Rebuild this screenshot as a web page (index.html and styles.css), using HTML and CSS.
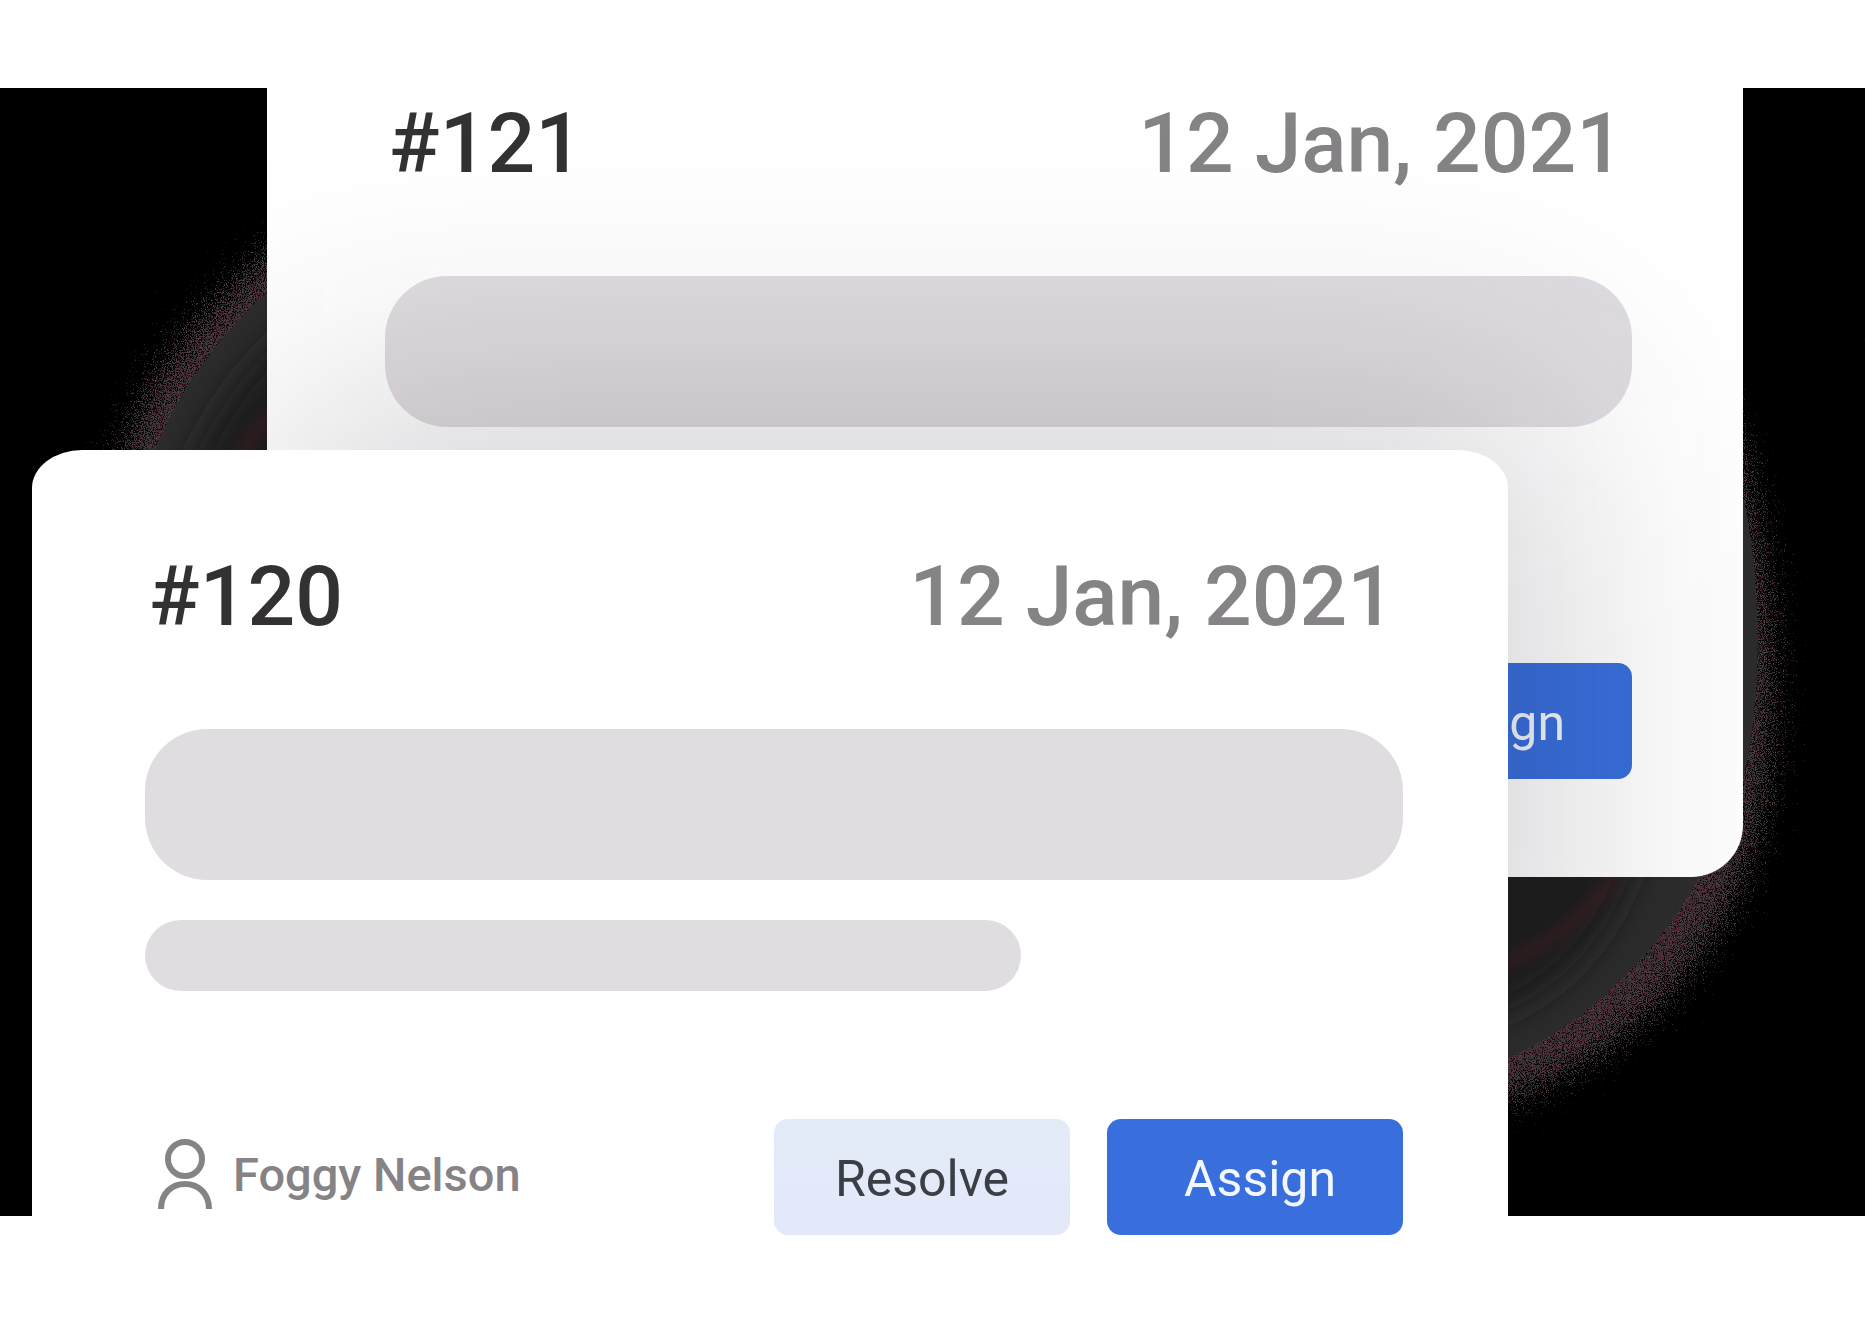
FILE: index.html
```html
<!DOCTYPE html>
<html lang="en">
<head>
<meta charset="utf-8">
<meta name="viewport" content="width=device-width, initial-scale=1">
<title>Tickets</title>
<link rel="stylesheet" href="styles.css">
</head>
<body>
<main class="stage">
  <svg class="halo" viewBox="0 0 1865 1128" preserveAspectRatio="none" aria-hidden="true">
    <defs>
      <filter id="soft" x="-10%" y="-10%" width="120%" height="120%"><feGaussianBlur stdDeviation="16"/></filter>
      <filter id="grain-grey" x="-10%" y="-10%" width="120%" height="120%">
        <feGaussianBlur in="SourceAlpha" stdDeviation="28" result="a"/>
        <feTurbulence type="fractalNoise" baseFrequency="0.9" numOctaves="2" seed="4" result="n"/>
        <feComposite in="a" in2="n" operator="arithmetic" k2="0.8" k3="1.5" k4="-1.3"/>
        <feComponentTransfer result="m"><feFuncA type="linear" slope="5"/></feComponentTransfer>
        <feFlood flood-color="#423e41"/>
        <feComposite in2="m" operator="in"/>
      </filter>
      <filter id="grain-red" x="-10%" y="-10%" width="120%" height="120%">
        <feGaussianBlur in="SourceAlpha" stdDeviation="26" result="a"/>
        <feTurbulence type="fractalNoise" baseFrequency="0.8" numOctaves="2" seed="19" result="n"/>
        <feComposite in="a" in2="n" operator="arithmetic" k2="0.7" k3="1.5" k4="-1.42"/>
        <feComponentTransfer result="m"><feFuncA type="linear" slope="5"/></feComponentTransfer>
        <feFlood flood-color="#4a1a27"/>
        <feComposite in2="m" operator="in"/>
      </filter>
      <path id="edge" d="M98 400C126 284 196 200 290 132L1735 300C1796 470 1801 680 1755 796C1710 896 1630 985 1490 1034Z"/>
    </defs>
    <use href="#edge" filter="url(#grain-grey)"/>
    <use href="#edge" filter="url(#grain-red)"/>
    <path fill="#2b2b2c" d="M142 400C165 320 215 245 290 185L1735 380C1765 470 1765 640 1735 715C1690 830 1610 930 1490 978Z"/>
    <path fill="#1d1b1c" filter="url(#soft)" d="M180 400C205 340 235 290 290 240L1600 500C1690 640 1660 870 1490 930Z"/>
    <path class="ring" d="M225 400Q245 345 290 310M1480 885Q1580 850 1625 770"/>
  </svg>

  <article class="card card-back">
    <header class="card-head">
      <h2 class="number">#121</h2>
      <time class="date" datetime="2021-01-12">12 Jan, 2021</time>
    </header>
    <div class="bar"></div>
    <div class="bar bar-short"></div>
    <footer class="card-foot">
      <button class="button button-primary" type="button">Assign</button>
    </footer>
  </article>

  <article class="card card-front">
    <header class="card-head">
      <h2 class="number">#120</h2>
      <time class="date" datetime="2021-01-12">12 Jan, 2021</time>
    </header>
    <div class="bar"></div>
    <div class="bar bar-short"></div>
    <footer class="card-foot">
      <div class="person">
        <svg width="54" height="72" viewBox="0 0 54 72" fill="none" stroke="currentColor" stroke-width="6" aria-hidden="true">
          <circle cx="27" cy="21" r="17"/>
          <path d="M3 71C3 55 14 46 27 46S51 55 51 71"/>
        </svg>
        <span>Foggy Nelson</span>
      </div>
      <button class="button button-light" type="button">Resolve</button>
      <button class="button button-primary" type="button">Assign</button>
    </footer>
  </article>
</main>
</body>
</html>
```
FILE: styles.css
```css
* {
  box-sizing: border-box;
}

body {
  margin: 0;
  background: #fff;
  font-family: Roboto, "Liberation Sans", sans-serif;
}

.stage {
  position: relative;
  display: grid;
  grid-template-columns: 32fr 235fr 1241fr 235fr 122fr;
  align-items: start;
  margin: 88px 0 118px;
  background: #000;
}

.halo {
  position: absolute;
  inset: 0;
  width: 100%;
  height: 100%;
}

.ring {
  fill: none;
  stroke: #3a1c22;
  stroke-width: 14;
  opacity: 0.6;
  filter: blur(6px);
}

.card {
  position: relative;
  grid-row: 1;
  min-width: 0;
  background: #fff;
}

.card-back {
  grid-column: 3 / 5;
  padding: 8px 111px 98px 118px;
  border-radius: 0 0 52px 0;
  overflow: hidden;
}

/* Shadow that the front card throws on this one */
.card-back::after {
  content: "";
  position: absolute;
  top: 316px;
  left: 1%;
  right: 13%;
  height: 700px;
  background: rgba(26, 18, 34, 0.2);
  filter: blur(130px);
  pointer-events: none;
}

.card-front {
  grid-column: 2 / 4;
  margin: 362px 0 -118px;
  padding: 99px 105px 99px 113px;
  border-radius: 50px 50px 0 0 / 38px 38px 0 0;
}

.card-head {
  display: flex;
  justify-content: space-between;
  margin-bottom: 84px;
  padding: 0 8px 0 4px;
  font-size: 84px;
  font-weight: 500;
  line-height: 96px;
}

.number {
  margin: 0;
  color: #333132;
  font-size: inherit;
  font-weight: inherit;
}

.date {
  color: #858385;
}

.bar {
  height: 151px;
  border-radius: 62px;
  background: #e0dde1;
}

.bar-short {
  width: 876px;
  max-width: 70%;
  height: 71px;
  margin-top: 40px;
  border-radius: 36px;
}

.card-foot {
  display: flex;
  align-items: center;
  justify-content: flex-end;
  gap: 37px;
  margin-top: 128px;
}

.card-back .card-foot {
  margin-top: 125px;
}

.person {
  display: flex;
  align-items: center;
  gap: 21px;
  margin-right: auto;
  padding: 0 0 6px 13px;
  color: #858385;
  font-size: 47px;
  font-weight: 500;
}

.button {
  width: 296px;
  height: 116px;
  padding: 4px 0 0;
  border: 0;
  border-radius: 14px;
  font: 400 50px/60px Roboto, "Liberation Sans", sans-serif;
}

.button-light {
  background: linear-gradient(#e2ebf8, #e4e8f8);
  color: #3b3f45;
}

.button-primary {
  padding-left: 10px;
  background: #386fdd;
  color: #f3f7ff;
}
```
